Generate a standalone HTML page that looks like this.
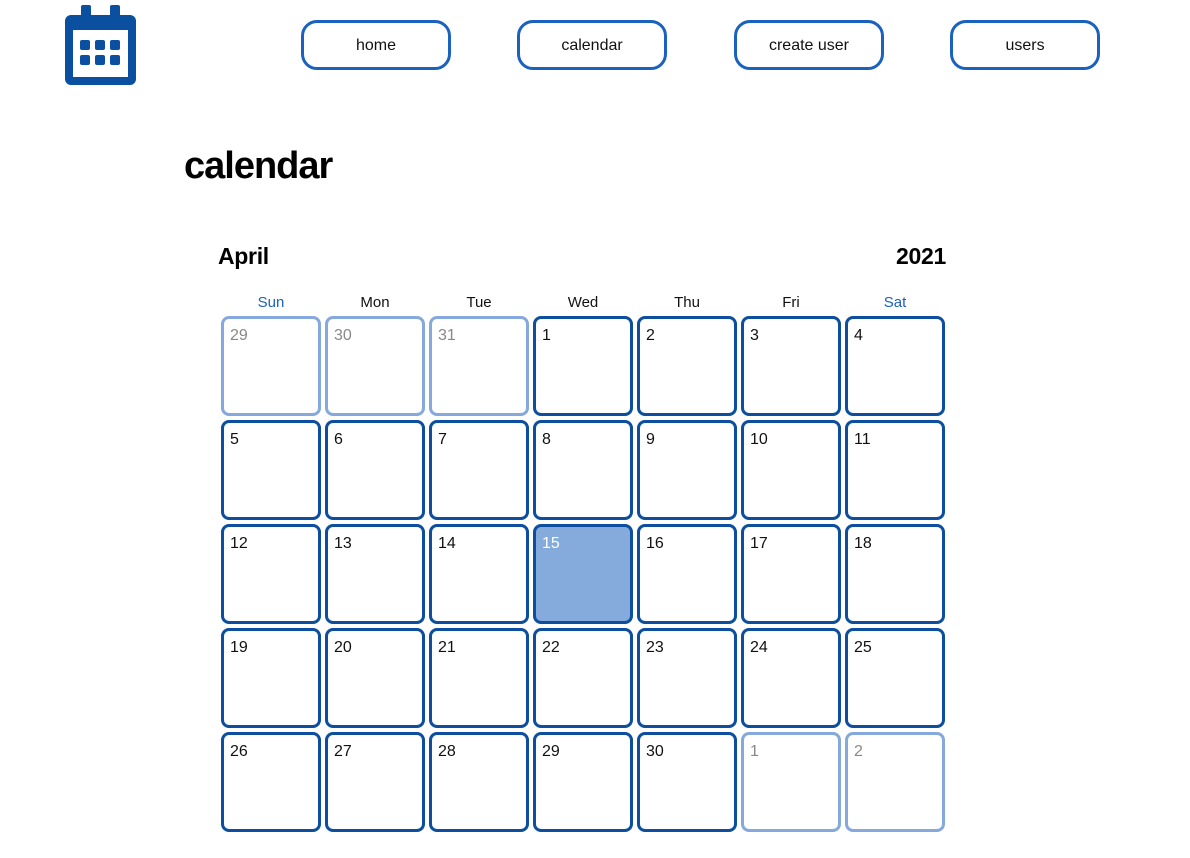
<!DOCTYPE html>
<html><head><style>
body{margin:0;width:1190px;height:858px;background:#fff;font-family:"Liberation Sans",sans-serif;position:relative;overflow:hidden}
.nav{position:absolute;top:20px;width:144px;height:44px;border:3px solid #1a62bd;border-radius:16px;text-align:center;line-height:46px;font-size:16px;color:#111}
h1{position:absolute;left:184px;top:145px;margin:0;font-size:38px;font-weight:bold;letter-spacing:-1px}
.hd{position:absolute;top:243px;font-size:23px;font-weight:bold;letter-spacing:-0.3px}
.dn{position:absolute;top:294px;width:100px;text-align:center;font-size:15px;color:#111}
.c{position:absolute;width:94px;height:94px;border:3px solid #0d4f9e;border-radius:8px;box-sizing:content-box}
.c span{position:absolute;left:6px;top:8px;font-size:16px;color:#111}
.o{border-color:#85a9dc}.o span{color:#888}
.t{background:#85aadc}.t span{color:#fff}
</style></head><body>
<svg style="position:absolute;left:65px;top:5px" width="72" height="81" viewBox="0 0 72 81">
<rect x="16" y="0" width="10" height="16" rx="2" fill="#0b50a0"/><rect x="45" y="0" width="10" height="16" rx="2" fill="#0b50a0"/>
<rect x="0" y="10" width="71" height="70" rx="6" fill="#0b50a0"/>
<rect x="8" y="25" width="55" height="47" fill="#fff"/>
<g fill="#0b50a0"><rect x="15" y="35" width="10" height="10" rx="2"/><rect x="30" y="35" width="10" height="10" rx="2"/><rect x="45" y="35" width="10" height="10" rx="2"/><rect x="15" y="50" width="10" height="10" rx="2"/><rect x="30" y="50" width="10" height="10" rx="2"/><rect x="45" y="50" width="10" height="10" rx="2"/></g>
</svg>
<div class="nav" style="left:301px">home</div>
<div class="nav" style="left:517px">calendar</div>
<div class="nav" style="left:734px">create user</div>
<div class="nav" style="left:950px">users</div>
<h1>calendar</h1>
<div class="hd" style="left:218px">April</div>
<div class="hd" style="right:244px">2021</div>
<div id="g"></div>
<script>
var d=["Sun","Mon","Tue","Wed","Thu","Fri","Sat"],h="";
for(var i=0;i<7;i++)h+='<div class="dn" style="left:'+(221+i*104)+'px;'+(i==0||i==6?'color:#1a62bd':'')+'">'+d[i]+'</div>';
var n=[29,30,31];for(var k=1;k<=30;k++)n.push(k);n.push(1,2);
for(var j=0;j<35;j++){var r=Math.floor(j/7),c=j%7,cl="c";if(j<3||j>32)cl+=" o";if(j==17)cl+=" t";
h+='<div class="'+cl+'" style="left:'+(221+c*104)+'px;top:'+(316+r*104)+'px"><span>'+n[j]+'</span></div>';}
document.getElementById("g").innerHTML=h;
</script>
</body></html>
